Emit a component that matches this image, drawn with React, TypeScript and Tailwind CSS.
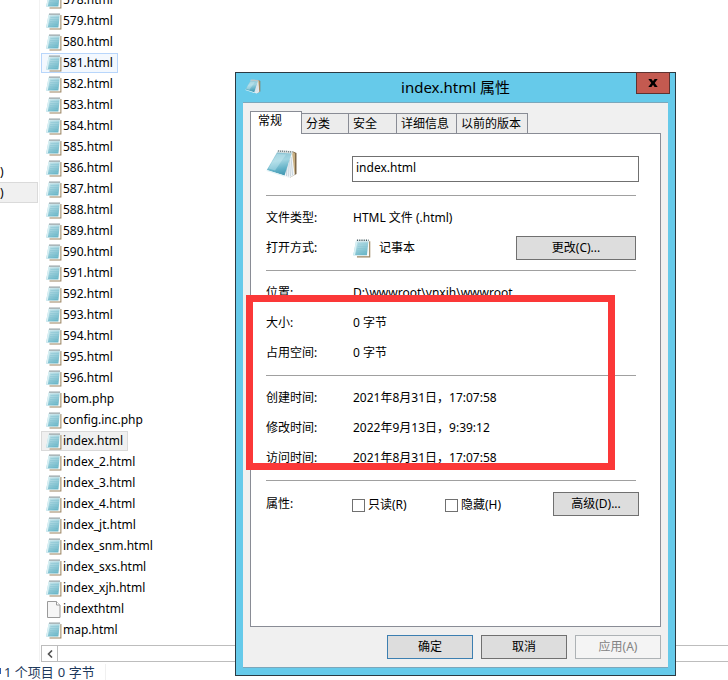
import { useState } from "react"

interface FileItem {
    name: string;
    kind: "notepad" | "blank";
    state?: "hover" | "selected";
}

const numbered: FileItem[] = Array.from({ length: 19 }, (_, i) => ({
    name: `${578 + i}.html`,
    kind: "notepad",
    state: i === 3 ? "hover" : undefined,
}));

const files: FileItem[] = [
    ...numbered,
    { name: "bom.php", kind: "notepad" },
    { name: "config.inc.php", kind: "notepad" },
    { name: "index.html", kind: "notepad", state: "selected" },
    { name: "index_2.html", kind: "notepad" },
    { name: "index_3.html", kind: "notepad" },
    { name: "index_4.html", kind: "notepad" },
    { name: "index_jt.html", kind: "notepad" },
    { name: "index_snm.html", kind: "notepad" },
    { name: "index_sxs.html", kind: "notepad" },
    { name: "index_xjh.html", kind: "notepad" },
    { name: "indexthtml", kind: "blank" },
    { name: "map.html", kind: "notepad" },
];

const tabs = [
    { label: "常规", width: "w-[52px]" },
    { label: "分类", width: "w-[47px]" },
    { label: "安全", width: "w-[48px]" },
    { label: "详细信息", width: "w-[60px]" },
    { label: "以前的版本", width: "w-[71px]" },
];

function NotepadIcon({ className }: { className: string }) {
    return (
        <svg viewBox="0 0 16 17" className={className} aria-hidden="true">
            <defs>
                <linearGradient id="page" x1="0" y1="0" x2="0.5" y2="1">
                    <stop offset="0" stopColor="#cfe9ee" />
                    <stop offset="0.5" stopColor="#a3d3de" />
                    <stop offset="1" stopColor="#6db8c9" />
                </linearGradient>
            </defs>
            <path d="M4 2H15.4V16.6H3.5V15H4Z" fill="#9b8462" />
            <path d="M4 2H14.4V15.5H3Z" fill="#fbfbf8" />
            <path d="M2.6 1.5H13.8L12.4 14.6H0.2Z" fill="url(#page)" />
            <path d="M2.6 1.5L0.2 14.6H1.8L4 1.5Z" fill="#d8f0f4" />
            <path d="M4.5 4.5H13M4.2 6.5H13M4 8.5H12.6M3.6 10.5H12.4M3.2 12.5H12" stroke="#85c3d0" strokeWidth="0.5" />
            <path d="M3 1.5H14.4" stroke="#e8f0f2" strokeWidth="1.6" />
            <path d="M3.5 1.2H14" stroke="#46595f" strokeWidth="1.3" strokeDasharray="1 1" />
        </svg>
    );
}

function BigNotepadIcon({ className }: { className: string }) {
    return (
        <svg viewBox="0 0 32 32" className={className} aria-hidden="true">
            <defs>
                <linearGradient id="cover" x1="0.3" y1="0" x2="0.5" y2="1">
                    <stop offset="0" stopColor="#86bfd0" />
                    <stop offset="0.4" stopColor="#a2d5e1" />
                    <stop offset="0.75" stopColor="#62b1c7" />
                    <stop offset="1" stopColor="#4398b2" />
                </linearGradient>
            </defs>
            <path d="M26 2L30.5 4V25L24 28.5Z" fill="#7d6748" />
            <path d="M26 2L29 4.5V25L24 28.5Z" fill="#c9b083" />
            <path d="M26 3L28.6 26L23 29L17 26.5Z" fill="#f1f5f8" />
            <path d="M25 8L26.6 26.5M23.6 11L24.5 27.5M22 15L22.4 27.5M20.4 19.5L20.5 27" stroke="#bccbd6" strokeWidth="0.8" />
            <path d="M11.5 2.5L26 3.5L18.5 26.5L0.8 21Z" fill="url(#cover)" />
            <path d="M11 5L2.5 19.5L9 21.5L20 5.5Z" fill="#d6f3f8" opacity="0.35" />
            <path d="M0.8 21L18.5 26.5L18.3 27.8L0.5 22Z" fill="#e3f3f6" />
            <path d="M11.8 1L26.8 2V4.4L11 3.6Z" fill="#dbe1e1" />
            <path d="M12 2L26.5 3" stroke="#77868b" strokeWidth="1.5" strokeDasharray="1 1" />
        </svg>
    );
}

function BlankIcon() {
    return (
        <svg viewBox="0 0 16 17" className="h-[17px] w-4 shrink-0" aria-hidden="true">
            <path d="M1.5 0.5H10.5L14 4V16.5H1.5Z" fill="#f6f6f6" stroke="#9a9a9a" />
            <path d="M10.5 0.5V4H14" fill="#fff" stroke="#9a9a9a" />
        </svg>
    );
}

function FileRow({ file }: { file: FileItem }) {
    const look =
        file.state === "hover"
            ? "border-[#b8d6fb] bg-[#f3f8fe]"
            : file.state === "selected"
              ? "border-[#dadada] bg-[#f0f0f0]"
              : "border-transparent";
    return (
        <li className={`mb-px flex h-5 w-fit items-center gap-px border px-1 ${look}`}>
            {file.kind === "notepad" ? <NotepadIcon className="h-[17px] w-4 shrink-0" /> : <BlankIcon />}
            <span className="leading-4">{file.name}</span>
        </li>
    );
}

function Explorer() {
    return (
        <div className="flex h-screen flex-col overflow-hidden">
            <div className="flex min-h-0 flex-1">
                <nav className="w-10 shrink-0 border-r border-[#f2f2f2] pt-[162px]">
                    <div className="h-5 leading-5">)</div>
                    <div className="h-[21px] w-[38px] border border-l-0 border-[#dadada] bg-[#f0f0f0] leading-5">)</div>
                </nav>
                <div className="flex min-w-0 flex-1 flex-col pl-px">
                    <ul className="-mt-[10px] flex-1">
                        {files.map((file) => (
                            <FileRow key={file.name} file={file} />
                        ))}
                    </ul>
                    <div className="flex h-[17px] shrink-0 border border-r-0 border-[#bdbdbd]">
                        <button aria-label="向左滚动" className="flex w-4 items-center justify-center border-r border-[#bdbdbd]">
                            <svg viewBox="0 0 8 8" className="size-2">
                                <path d="M6 0.5L2.5 4L6 7.5" fill="none" stroke="#505050" strokeWidth="1.6" />
                            </svg>
                        </button>
                    </div>
                </div>
            </div>
            <footer className="flex h-[18px] shrink-0 items-end text-[13px] leading-4 text-[#1e395b]">
                <span className="mr-[3px] h-[6px] w-px self-center bg-[#2f5fb0]"></span>
                <span>1 个项目</span>
                <span className="border-r border-[#f0f0f0] pl-1 pr-[10px]">0 字节</span>
            </footer>
        </div>
    );
}

function Field({ label, children }: { label: string; children: React.ReactNode }) {
    return (
        <div className="flex h-[30px] items-center">
            <dt className="w-[87px]">{label}</dt>
            <dd className="flex flex-1 items-center">{children}</dd>
        </div>
    );
}

function PropertiesDialog() {
    const [tab, setTab] = useState("常规");
    const [name, setName] = useState("index.html");
    const group = "mr-6 border-t border-[#a0a0a0] pt-[7px] pb-[7px]";
    const button = "h-6 border border-[#707070] bg-[#dddddd]";

    return (
        <div role="dialog" aria-label="index.html 属性" className="absolute left-[235px] top-[72px] w-[441px] border border-[#2b3a42] bg-[#66caea] px-[7px] pb-[7px]">
            <div className="relative flex h-[29px] items-center justify-center pb-0.5 text-[15px]">
                <BigNotepadIcon className="absolute left-[2px] top-[6px] size-4" />
                <h1>index.html 属性</h1>
                <button aria-label="关闭" className="absolute -right-[2px] -top-px flex h-[22px] w-[34px] items-center justify-center border border-[#5d3230] bg-[#c45a50]">
                    <svg viewBox="0 0 10 8" className="h-2 w-[10px]">
                        <path d="M0.3 0H3.4L5 2.3L6.6 0H9.7L6.7 4L9.7 8H6.6L5 5.7L3.4 8H0.3L3.3 4Z" fill="#000" />
                    </svg>
                </button>
            </div>
            <div className="border-y border-[#7ba7bb] bg-[#f0f0f0] px-[7px] pb-2 pt-2">
                <div role="tablist" className="flex h-[22px] items-end">
                    {tabs.map((t) => (
                        <button
                            key={t.label}
                            role="tab"
                            aria-selected={tab === t.label}
                            onClick={() => setTab(t.label)}
                            className={
                                tab === t.label
                                    ? `relative z-10 -mb-px h-[23px] shrink-0 self-start border border-b-0 border-[#898c95] bg-white pb-1 pr-3 ${t.width}`
                                    : `h-5 shrink-0 whitespace-nowrap border border-b-0 border-l-0 border-[#898c95] bg-[#ececec] px-1 text-left ${t.width}`
                            }
                        >
                            {t.label}
                        </button>
                    ))}
                </div>
                <div role="tabpanel" className="border border-[#898c95] bg-white pb-[110px] pl-[15px]">
                    <div className="flex items-end pb-[13px] pr-[21px] pt-[15px]">
                        <BigNotepadIcon className="mr-[54px] size-8 self-start" />
                        <input
                            aria-label="文件名"
                            value={name}
                            onChange={(e) => setName(e.target.value)}
                            className="mt-[7px] h-[26px] min-w-0 flex-1 border border-[#707070] bg-white px-[3px] pb-1 outline-none"
                        />
                    </div>
                    <dl className={group}>
                        <Field label="文件类型:">HTML 文件 (.html)</Field>
                        <Field label="打开方式:">
                            <NotepadIcon className="mr-2 h-[19px] w-[18px]" />
                            <span className="flex-1">记事本</span>
                            <button className={`${button} w-[120px]`}>更改(C)...</button>
                        </Field>
                    </dl>
                    <dl className={group}>
                        <Field label="位置:">D:\wwwroot\ynxjh\wwwroot</Field>
                        <Field label="大小:">0 字节</Field>
                        <Field label="占用空间:">0 字节</Field>
                    </dl>
                    <dl className={group}>
                        <Field label="创建时间:">2021年8月31日，17:07:58</Field>
                        <Field label="修改时间:">2022年9月13日，9:39:12</Field>
                        <Field label="访问时间:">2021年8月31日，17:07:58</Field>
                    </dl>
                    <div className="mr-6 border-t border-[#a0a0a0]"></div>
                    <div className="flex items-center pr-[21px] pt-[11px]">
                        <span className="w-[86px]">属性:</span>
                        <label className="flex w-[93px] items-center gap-[3px] pt-0.5">
                            <input type="checkbox" className="size-[13px] appearance-none border border-[#707070] bg-white checked:bg-[#707070]" />
                            只读(R)
                        </label>
                        <label className="flex flex-1 items-center gap-[3px] pt-0.5">
                            <input type="checkbox" className="size-[13px] appearance-none border border-[#707070] bg-white checked:bg-[#707070]" />
                            隐藏(H)
                        </label>
                        <button className={`${button} w-[86px]`}>高级(D)...</button>
                    </div>
                </div>
                <div className="flex justify-end gap-2 pt-2">
                    <button className="h-6 w-[86px] border border-[#3c7fb1] bg-[#dddddd]">确定</button>
                    <button className={`${button} w-[86px]`}>取消</button>
                    <button disabled className="h-6 w-[86px] border border-[#adb2b5] bg-[#f4f4f4] text-[#838383]">应用(A)</button>
                </div>
            </div>
            {/* highlight box over the size and date fields */}
            <div className="pointer-events-none absolute left-[10px] top-[222px] z-20 h-[175px] w-[369px] border-[7px] border-[#fb3838]"></div>
        </div>
    );
}

export default function App() {
    return (
        <main className="relative min-h-screen overflow-hidden bg-white font-['Noto_Sans','Noto_Sans_CJK_SC',sans-serif] text-xs text-black">
            <Explorer />
            <PropertiesDialog />
        </main>
    );
}
